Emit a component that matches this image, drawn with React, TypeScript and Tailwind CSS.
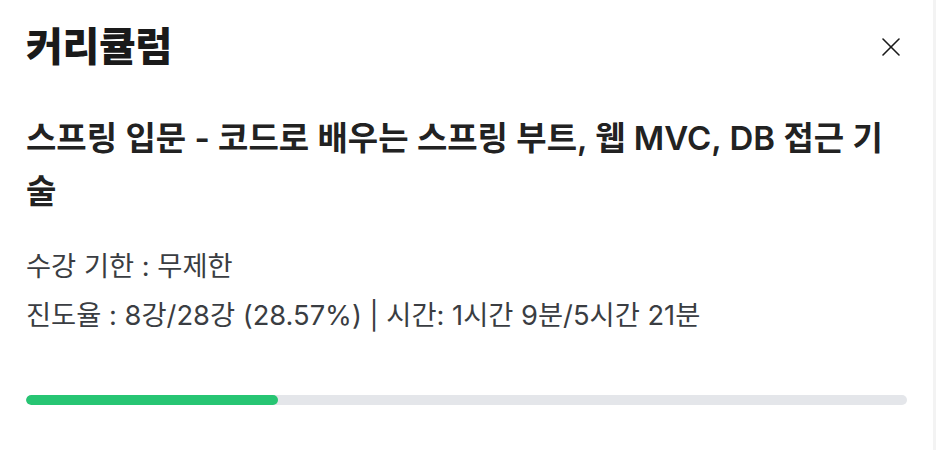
import React from 'react';

const progress = 28.57;

const App = () => {
  return (
    <div className="w-[936px] h-[450px] bg-white border-r-[3px] border-[#f3f3f3] overflow-hidden font-['Inter','Noto_Sans_CJK_KR',sans-serif]">
      <div className="px-[26px] pt-[22px]">
        <div className="flex items-center justify-between">
          <h1 className="text-[40px] leading-[50px] font-extrabold text-[#1a1a1a] tracking-[-0.3px]">커리큘럼</h1>
          <button className="mr-[6px] w-[20px] h-[20px] flex items-center justify-center text-[#1a1a1a]">
            <svg width="18" height="18" viewBox="0 0 18 18" fill="none" stroke="currentColor" strokeWidth="1.6" strokeLinecap="round">
              <line x1="1" y1="1" x2="17" y2="17" />
              <line x1="17" y1="1" x2="1" y2="17" />
            </svg>
          </button>
        </div>

        <h2 className="mt-[40px] max-w-[870px] text-[33px] leading-[53px] font-semibold text-[#222222]">
          스프링 입문 - 코드로 배우는 스프링 부트, 웹 MVC, DB 접근 기술
        </h2>

        <div className="mt-[24px] text-[27.3px] leading-[49px] text-[#3a3d42]">
          <p>수강 기한 : 무제한</p>
          <p>진도율 : 8강/28강 (28.57%) | 시간: 1시간 9분/5시간 21분</p>
        </div>

        <div className="mt-[55px] h-[10px] w-full rounded-full bg-[#e4e6ea] overflow-hidden">
          <div className="h-full rounded-full bg-[#27c573]" style={{ width: `${progress}%` }} />
        </div>
      </div>
    </div>
  );
};

export default App;
